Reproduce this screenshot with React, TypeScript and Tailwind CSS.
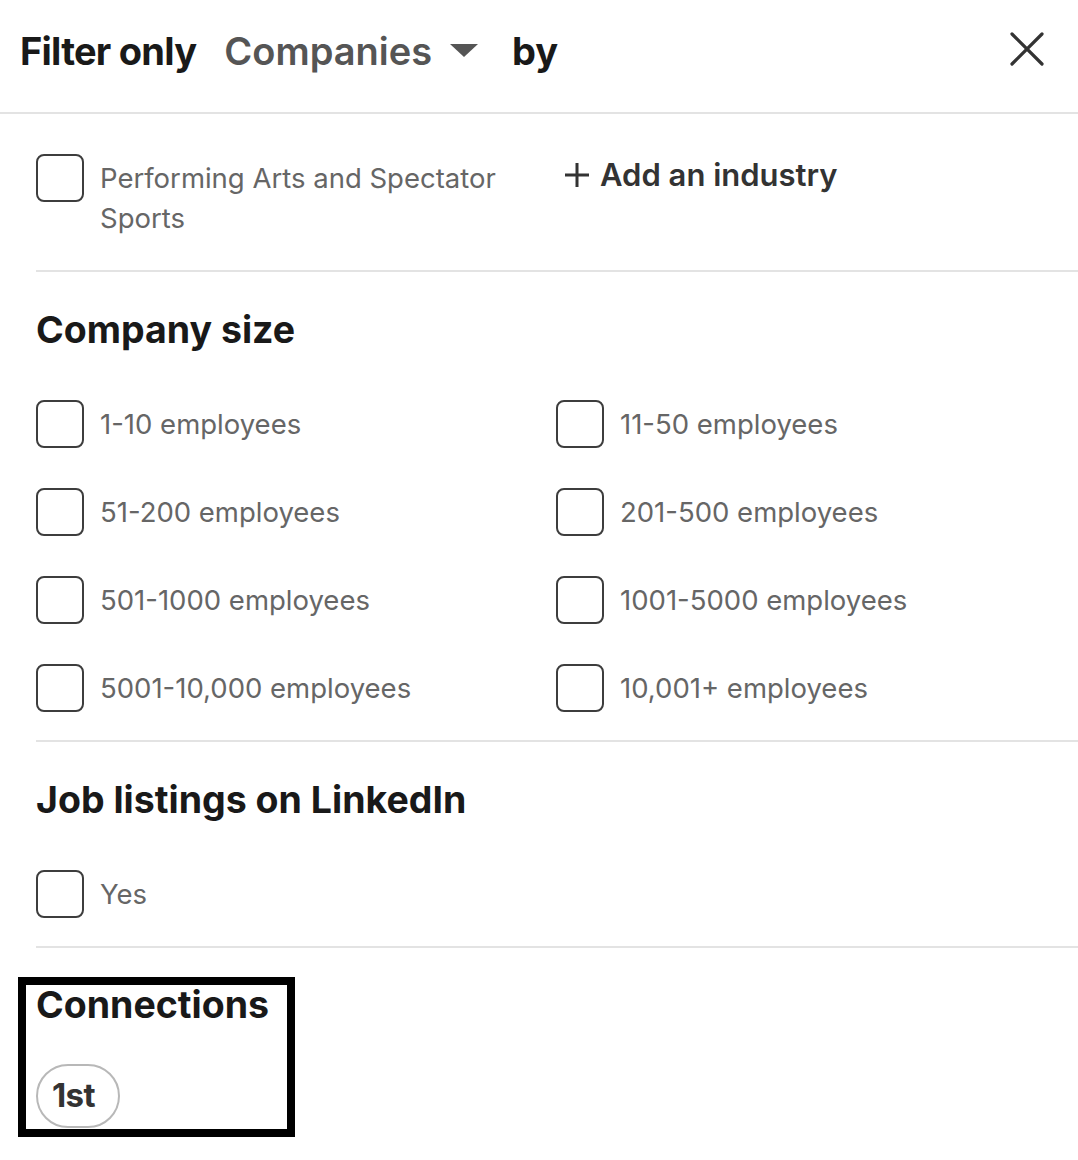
import React from 'react';

const sizes: string[][] = [
    [ '1-10 employees', '11-50 employees' ],
    [ '51-200 employees', '201-500 employees' ],
    [ '501-1000 employees', '1001-5000 employees' ],
    [ '5001-10,000 employees', '10,001+ employees' ],
];

const Box: React.FC = () => (
    <span className="block w-[48px] h-[48px] shrink-0 rounded-[8px] border-2 border-[#3d3d3d] bg-white"></span>
);

const CheckRow: React.FC<{ label: string }> = ( { label } ) => (
    <label className="flex items-center gap-[16px]">
        <Box />
        <span className="text-[27.5px] leading-[40px] text-[#666666]">{label}</span>
    </label>
);

const App: React.FC = () => {
    return (
        <div className="relative w-[1078px] min-h-[1160px] bg-white font-['Inter','Liberation_Sans',sans-serif] overflow-hidden">
            <div className="flex items-center h-[114px] pb-[10px] pl-[20px] pr-[34px] border-b-2 border-[#e3e3e3]">
                <span className="text-[38px] font-bold tracking-[-0.02em] text-[#191919]">Filter only</span>
                <button className="flex items-center ml-[28px] gap-[18px]">
                    <span className="text-[38px] font-semibold text-[#555555]">Companies</span>
                    <svg width="28" height="14" viewBox="0 0 28 14">
                        <path d="M0 0 L28 0 L14 13 Z" fill="#555555" />
                    </svg>
                </button>
                <span className="ml-[34px] text-[38px] font-bold text-[#191919]">by</span>
                <button className="ml-auto -mt-[5px]">
                    <svg width="34" height="34" viewBox="0 0 34 34">
                        <path d="M2 2 L32 32 M32 2 L2 32" stroke="#333333" strokeWidth="3.2" strokeLinecap="round" />
                    </svg>
                </button>
            </div>

            <div className="pl-[36px]">
                <div className="grid grid-cols-[520px_1fr] pt-[40px] pb-[32px]">
                    <label className="flex items-start gap-[16px]">
                        <Box />
                        <span className="mt-[4px] w-[420px] text-[27.5px] leading-[40px] text-[#666666]">Performing Arts and Spectator Sports</span>
                    </label>
                    <button className="flex items-center self-start gap-[10px] ml-[8px] mt-[1px] text-[31px] font-semibold leading-[40px] text-[#333333]">
                        <svg width="26" height="26" viewBox="0 0 26 26">
                            <path d="M13 1 V25 M1 13 H25" stroke="#333333" strokeWidth="3" />
                        </svg>
                        Add an industry
                    </button>
                </div>

                <div className="border-t-2 border-[#e3e3e3] pt-[36px] pb-[28px]">
                    <h3 className="text-[37.5px] leading-[44px] font-bold text-[#191919]">Company size</h3>
                    <div className="grid grid-cols-[520px_1fr] gap-y-[40px] mt-[48px]">
                        {sizes.map( ( row, i ) => (
                            <React.Fragment key={i}>
                                <CheckRow label={row[ 0 ]} />
                                <CheckRow label={row[ 1 ]} />
                            </React.Fragment>
                        ) )}
                    </div>
                </div>

                <div className="border-t-2 border-[#e3e3e3] pt-[36px] pb-[28px]">
                    <h3 className="text-[37.5px] leading-[44px] font-bold text-[#191919]">Job listings on LinkedIn</h3>
                    <div className="mt-[48px]">
                        <CheckRow label="Yes" />
                    </div>
                </div>

                <div className="border-t-2 border-[#e3e3e3] pt-[35px] pb-[32px]">
                    <h3 className="text-[37.5px] leading-[44px] font-bold text-[#191919]">Connections</h3>
                    <button className="mt-[37px] flex items-center justify-start pl-[14px] w-[84px] h-[64px] rounded-full border-2 border-[#b8b8b8] text-[33px] font-bold tracking-[-0.02em] text-[#333333]">1st</button>
                </div>
            </div>

            <div className="absolute left-[18px] top-[977px] w-[277px] h-[160px] border-[8px] border-black pointer-events-none"></div>
        </div>
    );
};

export default App;
